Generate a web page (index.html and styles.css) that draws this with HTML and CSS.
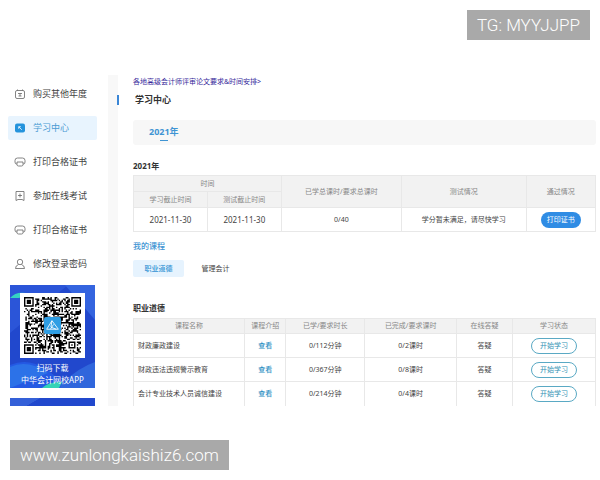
FILE: index.html
```
<!DOCTYPE html>
<html lang="zh-CN">
<head>
	<meta charset="UTF-8">
	<title>学习中心</title>
	<link rel="stylesheet" href="styles.css">
</head>
<body>
	<div class="tag tag-top">TG: MYYJJPP</div>
	<div class="page">
		<div class="side">
			<nav class="menu">
				<a href="#"><svg viewBox="0 0 12 12"><rect x="1.5" y="2.5" width="9" height="8" rx="1.5"/><path d="M3.5 1.5v1M8.5 1.5v1M4 5.5h4M4.5 8h3M6 5.5V8"/></svg>购买其他年度</a>
				<a href="#" class="current"><svg viewBox="0 0 12 12"><rect class="fill" x="1" y="1.5" width="10" height="9" rx="2"/><path class="white" d="M7.8 7.8L4.8 4.8M4.7 6.8V4.7h2.1"/></svg>学习中心</a>
				<a href="#"><svg viewBox="0 0 12 12"><path d="M3 8H2.5Q1 8 1 6V4.5Q1 2 3.5 2h5Q11 2 11 4.5V6Q11 8 9.5 8H9"/><path d="M3 6h6v2.5Q9 10 7.5 10h-3Q3 10 3 8.5z"/></svg>打印合格证书</a>
				<a href="#"><svg viewBox="0 0 12 12"><path d="M2 1.5h8v9L8 9.500H4L2 10.5zM4 5.5h4M6 3.5v4"/></svg>参加在线考试</a>
				<a href="#"><svg viewBox="0 0 12 12"><path d="M3 8H2.5Q1 8 1 6V4.5Q1 2 3.5 2h5Q11 2 11 4.5V6Q11 8 9.5 8H9"/><path d="M3 6h6v2.5Q9 10 7.5 10h-3Q3 10 3 8.5z"/></svg>打印合格证书</a>
				<a href="#"><svg viewBox="0 0 12 12"><circle cx="6" cy="4" r="2.7"/><path d="M4.5 6.5Q1.5 7.5 1.5 10.5h9Q10.5 7.5 7.5 6.5"/></svg>修改登录密码</a>
			</nav>
			<div class="promo">
				<svg class="deco" viewBox="0 0 85 103" preserveAspectRatio="none">
					<path fill="#2b55d8" d="M0 0h58L0 48z"/>
					<path fill="#3464df" d="M85 0v35L55 0z"/>
					<path fill="#35d3c2" d="M0 13Q7 5 20 9L9 13z"/>
					<path fill="#2459e3" d="M0 80Q28 68 56 103H0z"/>
					<path fill="#2c72e8" d="M0 82Q18 74 38 88L0 103z"/>
					<path fill="#2f66dc" d="M52 98Q70 82 85 77v26H50z"/>
					<path fill="#35d3b6" d="M32 103Q39 96 52 97L49 103z"/>
				</svg>
				<div class="qr">
					<svg viewBox="0 0 41 41"><path id="modules"/></svg>
					<svg class="logo" viewBox="0 0 16 16"><rect width="16" height="16" rx="2"/><path d="M2.5 11.5L7.5 3.5 13.5 11.5zM6 11.5l3-4.5M7.5 3.5l-1 6 5 2"/></svg>
				</div>
				<p>扫码下载</p>
				<p>中华会计网校APP</p>
			</div>
			<div class="promo-next"></div>
		</div>
		<div class="main">
			<a class="notice" href="#">各地高级会计师评审论文要求&amp;时间安排&gt;</a>
			<h1>学习中心</h1>
			<div class="years"><a href="#">2021年</a></div>
			<h2>2021年</h2>
			<table class="summary">
				<colgroup><col class="w16"><col class="w16"><col class="w26"><col class="w27"><col></colgroup>
				<thead>
					<tr><th colspan="2">时间</th><th rowspan="2">已学总课时/要求总课时</th><th rowspan="2">测试情况</th><th rowspan="2">通过情况</th></tr>
					<tr><th>学习截止时间</th><th>测试截止时间</th></tr>
				</thead>
				<tbody>
					<tr><td>2021-11-30</td><td>2021-11-30</td><td>0/40</td><td>学分暂未满足，请尽快学习</td><td><button class="print">打印证书</button></td></tr>
				</tbody>
			</table>
			<h3>我的课程</h3>
			<div class="tabs">
				<button class="current">职业道德</button>
				<button>管理会计</button>
			</div>
			<h2>职业道德</h2>
			<table class="course">
				<colgroup><col class="w24"><col class="w9"><col class="w17"><col class="w20"><col class="w12"><col></colgroup>
				<thead>
					<tr><th>课程名称</th><th>课程介绍</th><th>已学/要求时长</th><th>已完成/要求课时</th><th>在线答疑</th><th>学习状态</th></tr>
				</thead>
				<tbody>
					<tr><td>财政廉政建设</td><td><a href="#">查看</a></td><td>0/112分钟</td><td>0/2课时</td><td>答疑</td><td><button class="start">开始学习</button></td></tr>
					<tr><td>财政违法违规警示教育</td><td><a href="#">查看</a></td><td>0/367分钟</td><td>0/8课时</td><td>答疑</td><td><button class="start">开始学习</button></td></tr>
					<tr><td>会计专业技术人员诚信建设</td><td><a href="#">查看</a></td><td>0/214分钟</td><td>0/4课时</td><td>答疑</td><td><button class="start">开始学习</button></td></tr>
				</tbody>
			</table>
		</div>
	</div>
	<div class="tag tag-bottom">www.zunlongkaishiz6.com</div>
	<script src="qr.js"></script>
</body>
</html>
```
FILE: styles.css
```
* {margin: 0;padding: 0;box-sizing: border-box;}
body {background: #fff;color: #444;font: 7px/12px "Noto Sans", "Noto Sans CJK SC", sans-serif;}
a {text-decoration: none;color: inherit;}
button {font: inherit;border: 0;background: none;cursor: pointer;}

.tag {position: absolute;height: 30px;padding: 0 10px;background: #a9a9a9;color: #fff;font: 300 17px/30px Roboto, sans-serif;}
.tag-top {top: 10px;right: 10px;}
.tag-bottom {top: 440px;left: 10px;}

.page {display: flex;padding-top: 75px;}
.side {width: 118px;flex: none;display: flex;flex-direction: column;border-right: 10px solid #f8f8f8;padding: 7px 11px 0 8px;}
.menu {display: flex;flex-direction: column;gap: 10px;margin-bottom: 9px;}
.menu a {height: 24px;display: flex;align-items: center;gap: 7px;padding-left: 6px;font-size: 9px;border-radius: 2px;}
.menu a.current {background: #e8f4fe;color: #4a9bd3;}
.menu svg {width: 12px;height: 12px;fill: none;stroke: #666;stroke-width: 0.8;}
.menu .fill {fill: #2493dc;stroke: none;}
.menu .white {stroke: #fff;}

.promo {position: relative;height: 103px;margin: 0 2px 10px;padding-top: 8px;background: #2148cd;color: #fff;text-align: center;font-size: 8px;}
.promo p {position: relative;}
.deco {position: absolute;top: 0;left: 0;width: 100%;height: 100%;}
.qr {position: relative;width: 65px;height: 65px;margin: 0 auto 4px;padding: 4px;background: #fff;}
.qr svg {display: block;width: 100%;}
.qr .logo {position: absolute;top: 24px;left: 24px;width: 17px;height: 17px;fill: #2e9ee4;stroke: #fff;stroke-width: 0.8;}
.logo rect {stroke: none;}
.logo path {fill: none;}
.promo-next {flex: 1;margin: 0 2px;background: linear-gradient(150deg, #3460d8 30%, #2148cd 31%);}

.main {flex: 1;min-width: 0;padding: 1px 4px 0 15px;}
.notice {display: block;color: #35289a;}
h1 {height: 10px;margin: 7px 0 15px -16px;padding-left: 16px;border-left: 2px solid #3a86d6;font-size: 9px;line-height: 10px;color: #333;}
.years {height: 25px;padding-left: 16px;background: #f7f7f7;border-radius: 3px;}
.years a {display: inline-flex;flex-direction: column;align-items: center;color: #3f94d3;font-size: 9px;font-weight: bold;line-height: 20px;padding-top: 2px;}
.years a::after {content: "";width: 8px;height: 1px;margin-top: -2px;background: #3f94d3;}
h2 {font-size: 8px;line-height: 12px;color: #333;}
.years + h2 {margin: 15px 0 3px;}
h3 {margin: 8px 0;font-size: 8px;line-height: 12px;font-weight: 500;color: #3f94d3;}

table {width: 100%;table-layout: fixed;border-collapse: collapse;text-align: center;}
th, td {border: 1px solid #e8e8e8;white-space: nowrap;}
th {height: 16px;background: #f2f2f2;color: #888;font-weight: normal;}
td {height: 24px;}
td a {color: #3292c4;font-weight: 500;}
.w9 {width: 9%;}
.w12 {width: 12%;}
.w16 {width: 16%;}
.w17 {width: 17%;}
.w20 {width: 20%;}
.w24 {width: 24%;}
.w26 {width: 26%;}
.w27 {width: 27%;}
.summary td:nth-child(-n+2) {font-size: 8px;}
.course th {height: 15px;}
.course td:first-child {text-align: left;padding-left: 4px;}
.course tbody tr:last-child td {border-bottom: 0;}
.print, .start {display: block;height: 16px;margin: 0 auto;border-radius: 8px;}
.print {width: 40px;background: #2f8ce4;color: #fff;}
.start {width: 46px;border: 1px solid #5aa9c4;color: #3292b4;line-height: 14px;}

.tabs {display: flex;gap: 6px;margin-bottom: 25px;}
.tabs button {width: 51px;height: 17px;border-radius: 2px;color: #444;}
.tabs .current {background: #e6f3fe;color: #3292d4;font-weight: 500;}
.tabs + h2 {margin-bottom: 4px;}
```
FILE: qr.js
```
var size = 41,
	seed = 7,
	d = "";

function random() {
	seed = (seed * 16807) % 2147483647;
	return seed / 2147483647;
}

// square rings: finder corners are 7 wide, the alignment mark is 5 wide
function ring(x, y, cx, cy, r) {
	var dist = Math.max(Math.abs(x - cx), Math.abs(y - cy));
	if (dist > r + 1) {
		return null;
	}
	return r === 3 ? dist < 2 || dist === 3 : dist !== 1 && dist !== 3;
}

for (var y = 0; y < size; y++) {
	for (var x = 0; x < size; x++) {
		var on = random() < 0.52,
			marks = [ring(x, y, 3, 3, 3), ring(x, y, 37, 3, 3), ring(x, y, 3, 37, 3), ring(x, y, 34, 34, 2)];
		for (var i = 0; i < marks.length; i++) {
			if (marks[i] !== null) {
				on = marks[i];
			}
		}
		if (on) {
			d += "M" + x + " " + y + "h1v1h-1z";
		}
	}
}
document.getElementById("modules").setAttribute("d", d);
```
